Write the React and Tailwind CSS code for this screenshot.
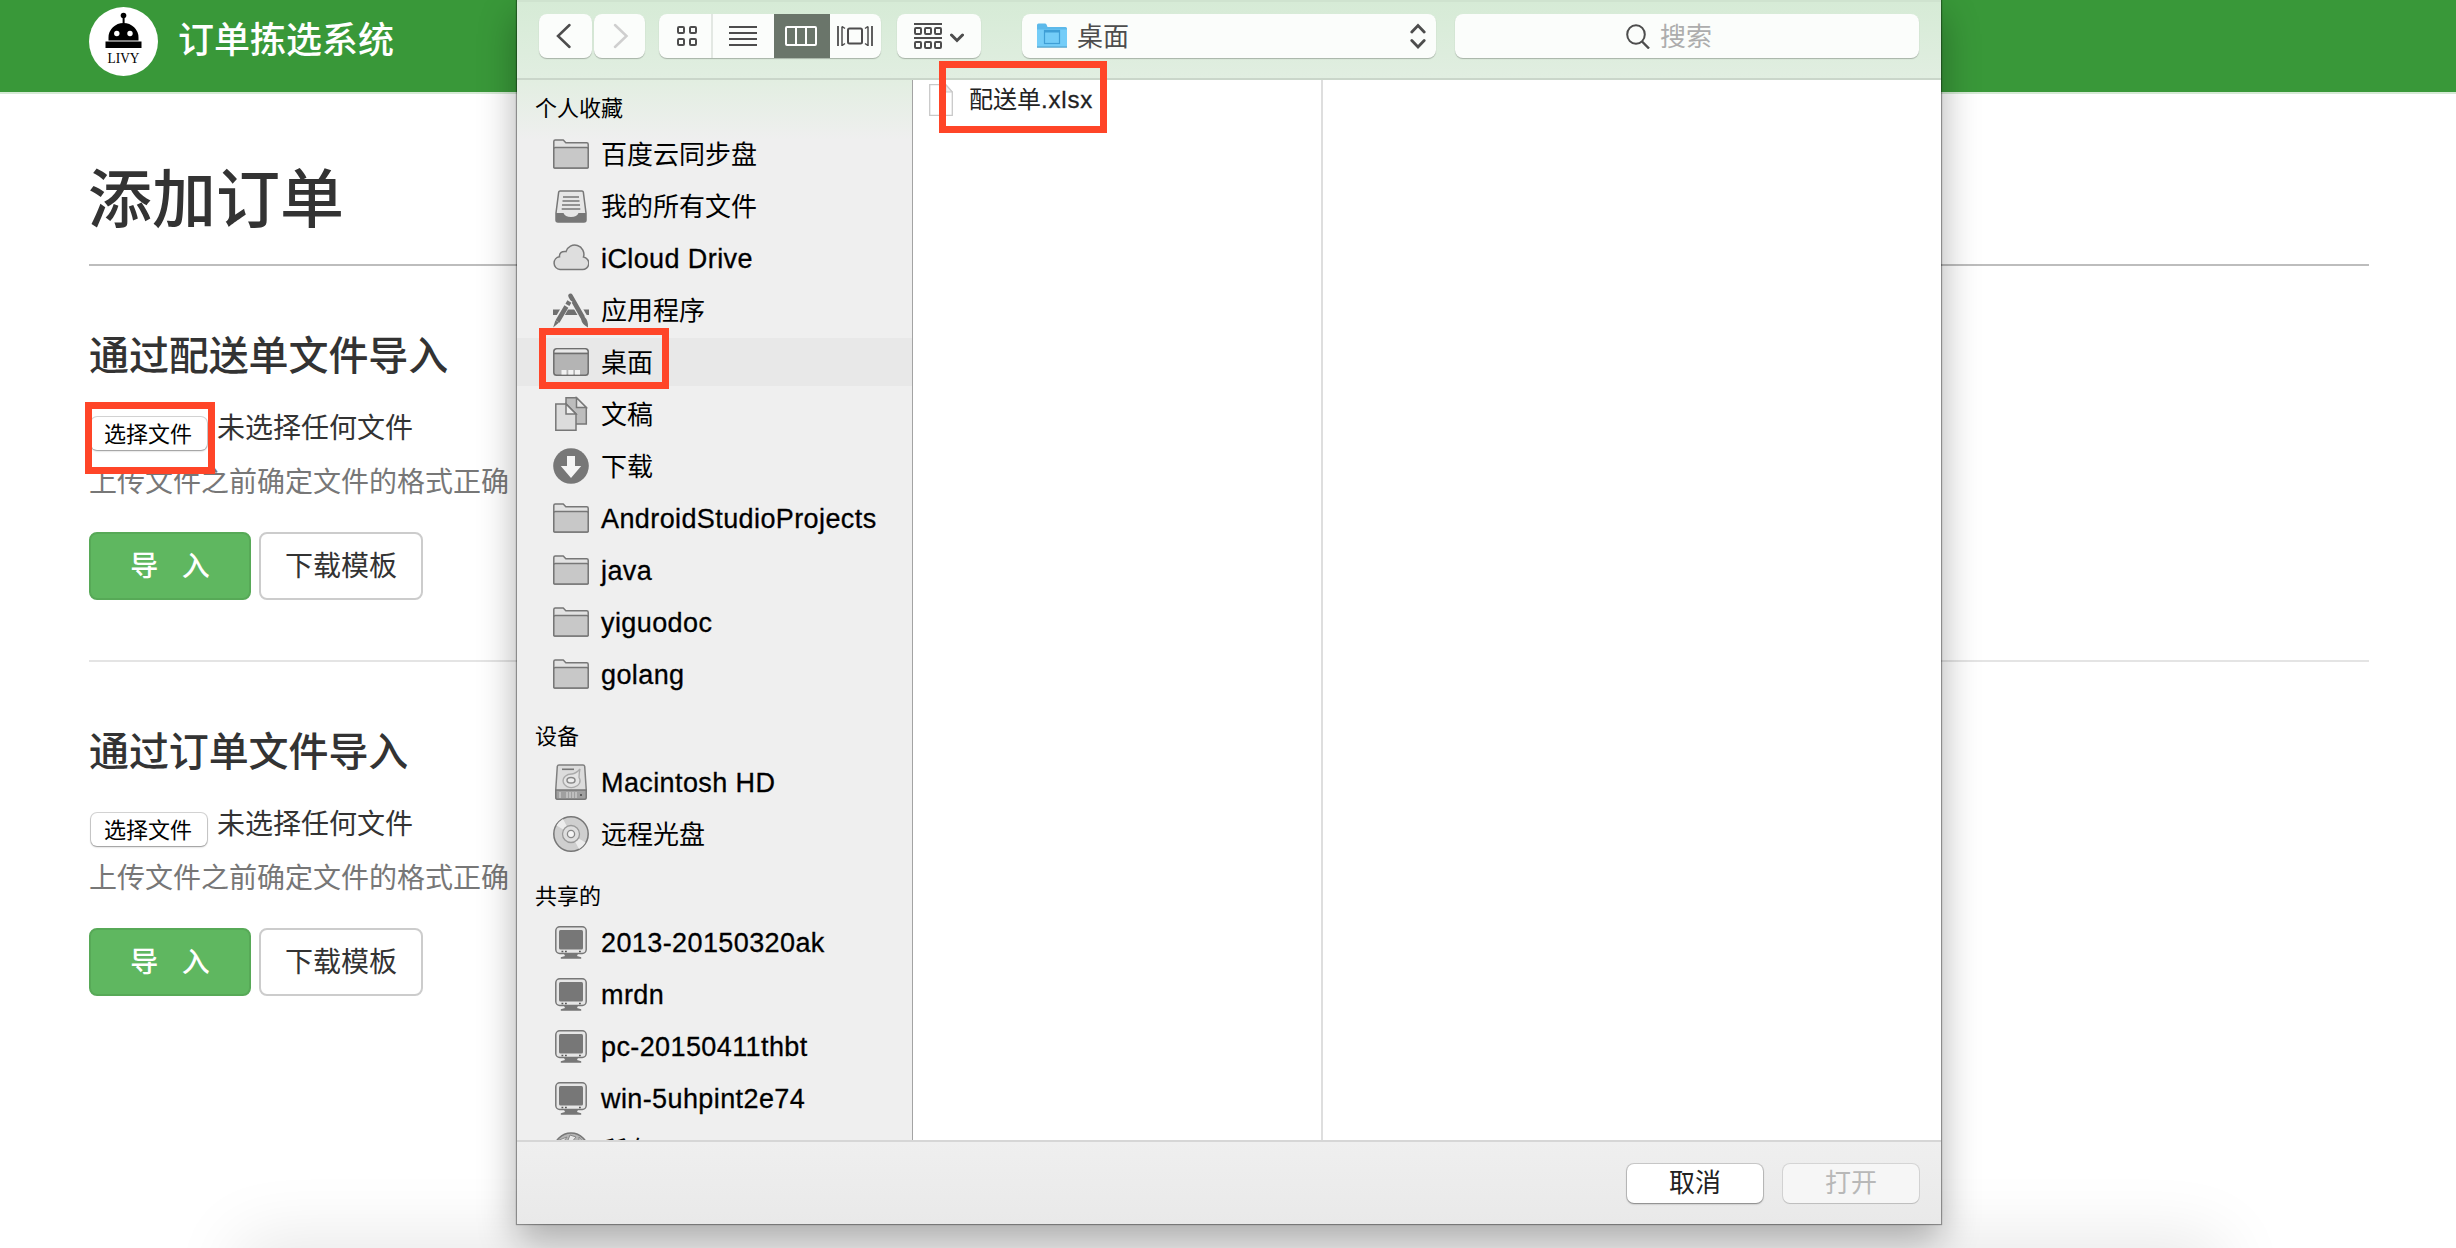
import React from "react";

const FONT = "font-['Liberation_Sans','Noto_Sans_CJK_SC',sans-serif]";

function Logo() {
  return (
    <svg className="size-[69px] shrink-0" viewBox="0 0 69 69">
      <circle cx="34.5" cy="34.5" r="34.5" fill="#fff" />
      <circle cx="34.5" cy="8.5" r="2.8" fill="#000" />
      <path d="M33.6 9h2v8h-2z" fill="#000" />
      <path d="M19.500 33.500v-3a15 14.500 0 0 1 30 0v3z" fill="#000" />
      <path d="M16.500 34.500h36v6.500h-36z" fill="#000" />
      <circle cx="27.800" cy="26.500" r="2.700" fill="#fff" />
      <circle cx="41" cy="26.500" r="2.700" fill="#fff" />
      <text x="34.500" y="55.500" textAnchor="middle" fontFamily="Liberation Serif, serif" fontSize="14" textLength="32" lengthAdjust="spacingAndGlyphs" fill="#000">LIVY</text>
    </svg>
  );
}

const icons = {
  folder: (
    <g stroke="#777" strokeWidth="1.500" strokeLinejoin="round">
      <path d="M.8 31V5.500Q.8 4 2.300 4h8l2.500 2.700h20.900q1.500 0 1.500 1.500V31q0 1-1 1H1.800q-1 0-1-1z" fill="#e2e2e2" />
      <path d="M.8 13q0-1.500 1.500-1.500h31.400q1.500 0 1.500 1.500v18q0 1-1 1H1.800q-1 0-1-1z" fill="#c8c8c8" />
    </g>
  ),
  allFiles: (
    <g>
      <path d="M7 3h22q1 0 1.300 1L33 25v7q0 2-2 2H5q-2 0-2-2v-7L5.700 4Q6 3 7 3z" fill="#e6e6e6" stroke="#777" strokeWidth="1.500" />
      <path d="M10 9h16M9.500 13h17M9 17h18M8.700 21h18.600" stroke="#777" strokeWidth="1.500" />
      <path d="M3 25h7.500q1.500 4 7.500 4t7.500-4H33v7q0 2-2 2H5q-2 0-2-2z" fill="#777" />
    </g>
  ),
  cloud: (
    <path d="M7 29.500a6.400 6.400 0 0 1-.5-12.700Q6 11 13 11.600A9 9 0 0 1 30.500 17a6.300 6.300 0 0 1-1.500 12.500z" fill="#dedede" stroke="#777" strokeWidth="1.500" />
  ),
  apps: (
    <g fill="#707070">
      <path d="M0 17.500h36V23H0z" />
      <path d="M17.200 2.500 36 35" stroke="#efefef" strokeWidth="8" />
      <path d="M17.500 3.800 29.500 25" stroke="#707070" strokeWidth="4.600" strokeLinecap="round" />
      <path d="M28 27l3.700-2q3.800 3.500 3.300 10.500-6-3-7-8.500z" />
      <path d="M16.500 8 2 33" stroke="#efefef" strokeWidth="7" />
      <path d="m16.400 9.500-2 3.400M13.400 14.500 4.500 29.500" stroke="#707070" strokeWidth="4.600" />
      <path d="M2.300 28.500 6 30.500.2 35.500z" />
    </g>
  ),
  desktop: (
    <g>
      <rect x=".8" y="4.800" width="34.400" height="26.400" rx="2.800" fill="#b4b4b4" stroke="#6e6e6e" strokeWidth="1.500" />
      <path d="M1.600 8.500q0-3 2.500-3h27.800q2.500 0 2.500 3z" fill="#e8e8e8" />
      <path d="M1 9.500h34" stroke="#6e6e6e" strokeWidth="1.500" />
      <path d="M8.500 26h5v4.500h-5zM15.300 26h5v4.500h-5zM22 26h5v4.500h-5z" fill="#f3f3f3" />
    </g>
  ),
  docs: (
    <g stroke="#777" strokeWidth="1.500">
      <path d="M13 1.800h10.500L33.300 11.500v16.500H13z" fill="#bdbdbd" />
      <path d="M23.500 1.800v9.700h9.800z" fill="#e6e6e6" />
      <path d="M2.800 8h10.500L23 17.800v16.400H2.800z" fill="#dcdcdc" />
      <path d="M13 8v10h10z" fill="#efefef" />
    </g>
  ),
  download: (
    <g>
      <circle cx="18" cy="18" r="17.800" fill="#777" />
      <path d="M14 8h8v10h6.200L18 30 7.800 18H14z" fill="#f5f5f5" />
    </g>
  ),
  disk: (
    <g>
      <path d="M6 .9h24q1.400 0 1.700 1.500L33.200 25v8.500q0 1.700-1.700 1.700h-27q-1.700 0-1.700-1.700V25L4.300 2.400Q4.600.9 6 .9z" fill="#dcdcdc" stroke="#808080" strokeWidth="1.500" />
      <path d="M9 5.300h12" stroke="#777" strokeWidth="1.600" />
      <path d="M27 5q-1 4-1 8.500a8.500 6.800 0 1 1-7-3.500q4-.5 8-5z" fill="#e4e4e4" stroke="#aaa" strokeWidth="1.300" />
      <ellipse cx="18" cy="16.200" rx="4" ry="2.800" fill="#eee" stroke="#888" strokeWidth="1.500" />
      <path d="M2.800 26h30.400v7.500q0 1.700-1.700 1.700h-27q-1.700 0-1.700-1.700z" fill="#a0a0a0" stroke="#777" strokeWidth="1.400" />
      <path d="M7 28v6M14 28v6M17 28v6M20 28v6M23 28v6" stroke="#cfcfcf" strokeWidth="1.300" />
      <circle cx="28" cy="31" r="1" fill="#444" />
    </g>
  ),
  disc: (
    <g>
      <circle cx="18" cy="18" r="17.200" fill="#cfcfcf" stroke="#777" strokeWidth="1.500" />
      <path d="M18 18 3.500 9.500A17 17 0 0 1 10 3zM18 18l14.500 8.500A17 17 0 0 1 26 33z" fill="#ececec" />
      <circle cx="18" cy="18" r="8.500" fill="#dedede" stroke="#999" strokeWidth="1.300" />
      <circle cx="18" cy="18" r="3.600" fill="#f5f5f5" stroke="#888" strokeWidth="1.300" />
    </g>
  ),
  pc: (
    <g>
      <rect x="2.800" y="2.800" width="30.400" height="26.600" rx="4" fill="#e6e6e6" stroke="#777" strokeWidth="1.500" />
      <rect x="6" y="6" width="24" height="19.500" rx="1.500" fill="#777" />
      <path d="M8.500 26.700h1.800v1.600H8.500zM12 26.700h1.800v1.600H12zM26 26.700h1.800v1.600H26z" fill="#555" />
      <path d="M11 29.800h14l-1 2.200 4.200 1.200v1.600H7.800v-1.600L12 32z" fill="#777" />
    </g>
  ),
  globe: (
    <g>
      <circle cx="18" cy="18" r="17" fill="#b5b5b5" stroke="#777" strokeWidth="1.600" />
      <path d="M6 8l8-3-5 7-6 2zM17 3l6 2-5 6-3-3zM26 5l5 6-5-1z" fill="#e8e8e8" stroke="#888" />
    </g>
  ),
};

function SideItem({ icon, label, active }) {
  const latin = label.charCodeAt(0) < 128;
  return (
    <li className="flex h-[52px] items-center">
      <div className={"flex h-12 w-full items-center pl-9 " + (active ? "bg-[#e8e8e8]" : "")}>
        <svg className="size-9 shrink-0" viewBox="0 0 36 36">{icons[icon]}</svg>
        <span
          className={
            "ml-3 pt-0.5 whitespace-nowrap leading-[48px] text-black " +
            (latin ? "text-[27px] tracking-[0.4px] [-webkit-text-stroke:0.3px_black]" : "text-[26px]")
          }
        >
          {label}
        </span>
      </div>
    </li>
  );
}

const sections = [
  {
    title: "个人收藏",
    heading: "h-12 pt-[9px]",
    items: [
      ["folder", "百度云同步盘"],
      ["allFiles", "我的所有文件"],
      ["cloud", "iCloud Drive"],
      ["apps", "应用程序"],
      ["desktop", "桌面", true],
      ["docs", "文稿"],
      ["download", "下载"],
      ["folder", "AndroidStudioProjects"],
      ["folder", "java"],
      ["folder", "yiguodoc"],
      ["folder", "golang"],
    ],
  },
  { title: "设备", heading: "h-14 pt-[17px]", items: [["disk", "Macintosh HD"], ["disc", "远程光盘"]] },
  {
    title: "共享的",
    heading: "h-14 pt-[17px]",
    items: [["pc", "2013-20150320ak"], ["pc", "mrdn"], ["pc", "pc-20150411thbt"], ["pc", "win-5uhpint2e74"], ["globe", "所有…"]],
  },
];

function Sidebar() {
  return (
    <aside className="h-full w-[396px] shrink-0 overflow-hidden border-r border-[#a3a3a3] bg-[#efefef] bg-[linear-gradient(to_bottom,#e2eee1,#efefef_60px)]">
      {sections.map((s) => (
        <section key={s.title}>
          <h4 className={"pl-[18px] text-[22px] leading-10 text-black " + s.heading}>{s.title}</h4>
          <ul>
            {s.items.map(([icon, label, active]) => (
              <SideItem key={label} icon={icon} label={label} active={active} />
            ))}
          </ul>
        </section>
      ))}
    </aside>
  );
}

const CTRL = "flex h-11 items-center justify-center rounded-lg bg-[#fbfdfb] shadow-[0_1px_1px_rgba(0,0,0,0.25)]";

function Toolbar() {
  return (
    <div className="flex h-20 items-start border-t-2 border-b-2 border-t-[#cfe3cf] border-b-[#cad6ca] bg-[linear-gradient(to_bottom,#d6ebd6,#e1eee1)] pt-3 pl-[22px]">
      <button className={CTRL + " w-[53px]"}>
        <svg className="size-7" viewBox="0 0 28 28" fill="none" stroke="#4d4d4d" strokeWidth="2.500">
          <path d="M17.500 3 6 14l11.500 11" strokeLinecap="round" />
        </svg>
      </button>
      <button className={CTRL + " ml-0.5 w-[51px]"}>
        <svg className="size-7" viewBox="0 0 28 28" fill="none" stroke="#cfcfcf" strokeWidth="2.500">
          <path d="M9 3 20.500 14 9 25" strokeLinecap="round" />
        </svg>
      </button>
      <div className={CTRL + " ml-3.5 w-[222px] overflow-hidden"}>
        <div className="flex h-full w-[54px] items-center justify-center border-r-2 border-[#e3e8e3]">
          <svg className="h-5 w-[21px] translate-x-0.5" viewBox="0 0 21 20" fill="none" stroke="#4d4d4d" strokeWidth="2">
            <rect x="1" y="1" width="6" height="6" rx="1" />
            <rect x="13" y="1" width="6" height="6" rx="1" />
            <rect x="1" y="13" width="6" height="6" rx="1" />
            <rect x="13" y="13" width="6" height="6" rx="1" />
          </svg>
        </div>
        <div className="flex h-full w-[61px] items-center justify-center">
          <svg className="h-5 w-7 -translate-x-px" viewBox="0 0 28 20" stroke="#4d4d4d" strokeWidth="2">
            <path d="M0 1h28M0 7h28M0 13h28M0 19h28" />
          </svg>
        </div>
        <div className="flex h-full w-14 items-center justify-center bg-[#6a756a]">
          <svg className="h-5 w-8 -translate-x-px" viewBox="0 0 32 20" fill="none" stroke="#fff" strokeWidth="2">
            <rect x="1" y="1" width="30" height="18" rx="1" />
            <path d="M11 1v18M21 1v18" />
          </svg>
        </div>
        <div className="flex h-full w-[51px] items-center justify-center">
          <svg className="h-5 w-9 -translate-x-px" viewBox="0 0 36 20" fill="none" stroke="#4d4d4d" strokeWidth="1.800">
            <path d="M1 0v20M35 0v20" />
            <path d="M5 .5v19l3-2M5 .5l3 2M31 .5v19l-3-2M31 .5l-3 2" strokeWidth="1.500" />
            <rect x="11" y="2.500" width="14" height="15" rx="1.500" strokeWidth="2" />
          </svg>
        </div>
      </div>
      <button className={CTRL + " ml-4 w-[84px] gap-2"}>
        <svg className="h-[26px] w-7" viewBox="0 0 28 26" fill="none" stroke="#4d4d4d" strokeWidth="2">
          <path d="M0 1h28M0 15h28" />
          <rect x="1" y="5" width="6" height="6" rx="1" />
          <rect x="11" y="5" width="6" height="6" rx="1" />
          <rect x="21" y="5" width="6" height="6" rx="1" />
          <rect x="1" y="19" width="6" height="6" rx="1" />
          <rect x="11" y="19" width="6" height="6" rx="1" />
          <rect x="21" y="19" width="6" height="6" rx="1" />
        </svg>
        <svg className="h-3 w-3.5 translate-y-0.5" viewBox="0 0 14 12" fill="none" stroke="#4d4d4d" strokeWidth="3">
          <path d="M1.500 3 7 8.500 12.500 3" strokeLinecap="round" />
        </svg>
      </button>
      <button className={CTRL + " ml-[41px] w-[414px] px-[15px]"}>
        <svg className="h-[26px] w-[30px]" viewBox="0 0 30 26">
          <path d="M0 24V2q0-1.500 1.500-1.500H8q1 0 1.500 1L10.500 4h18q1.500 0 1.500 1.500V24z" fill="#5cb9ea" />
          <path d="M0 6.500h30V24H0z" fill="#74cdf8" />
          <path d="M0 23.500h30v1.200H0z" fill="#4d9fca" />
          <rect x="7.500" y="7.500" width="15" height="13" fill="none" stroke="#3f9fd6" strokeWidth="1.200" />
          <path d="M7.500 8.500h15" stroke="#3f9fd6" strokeWidth="2" />
        </svg>
        <span className="ml-2.5 pt-px text-[26px] leading-[44px] text-[#4d4d4d]">桌面</span>
        <svg className="ml-auto h-[26px] w-4 translate-x-[5px]" viewBox="0 0 16 26" fill="none" stroke="#4d4d4d" strokeWidth="2.800" strokeLinecap="round">
          <path d="M1.800 9 8 2.500 14.200 9M1.800 17.500 8 24l6.200-6.500" />
        </svg>
      </button>
      <div className={CTRL + " ml-[19px] w-[464px] pr-9"}>
        <svg className="h-[25px] w-6" viewBox="0 0 24 25" fill="none" stroke="#4d4d4d" strokeWidth="2">
          <ellipse cx="10" cy="10.500" rx="8.800" ry="9.300" />
          <path d="m16 17.500 7 7" strokeWidth="2.400" />
        </svg>
        <span className="ml-2.5 pt-px text-[26px] leading-[44px] text-[#adadad]">搜索</span>
      </div>
    </div>
  );
}

function Highlight({ className }) {
  return <div className={"pointer-events-none absolute border-[7px] border-[#ff4528] " + className} />;
}

function Dialog() {
  return (
    <div className="absolute top-0 left-[517px] flex h-[1224px] w-[1424px] flex-col bg-white shadow-[0_0_1px_1px_rgba(0,0,0,0.35),0_16px_36px_rgba(0,0,0,0.32)]">
      <Toolbar />
      <div className="flex h-[1060px]">
        <Sidebar />
        <div className="w-[410px] shrink-0 border-r-2 border-[#dedede] pl-4">
          <div className="flex h-9 items-center pt-[3px]">
            <svg className="h-8 w-6" viewBox="0 0 24 32">
              <path d="M.7.700h16L23.300 8v23.300H.7z" fill="#fff" stroke="#c9c9c9" strokeWidth="1.300" />
              <path d="M16.700.700V8h6.600z" fill="#eee" stroke="#c9c9c9" strokeWidth="1.200" />
            </svg>
            <span className="ml-4 text-2xl leading-9 text-[#222]">
              配送单<span className="tracking-[0.8px] [-webkit-text-stroke:0.3px_#222]">.xlsx</span>
            </span>
          </div>
        </div>
      </div>
      <div className="flex h-[84px] justify-end gap-5 border-t-2 border-[#d6d6d6] bg-[linear-gradient(to_bottom,#efefef,#e9e9e9)] pt-[22px] pr-[22px]">
        <button className="h-[39px] w-[136px] rounded-[7px] bg-white text-[26px] leading-[39px] text-[#222] shadow-[0_0_0_1px_rgba(0,0,0,0.15),0_1px_2px_rgba(0,0,0,0.35)]">取消</button>
        <button className="h-[39px] w-[136px] rounded-[7px] bg-[#f6f6f6] text-[26px] leading-[39px] text-[#b8b8b8] shadow-[0_0_0_1px_rgba(0,0,0,0.1),0_1px_1px_rgba(0,0,0,0.1)]">打开</button>
      </div>
      <Highlight className="top-[61px] left-[422px] h-[72px] w-[168px]" />
      <Highlight className="top-[328px] left-[22px] h-[61px] w-[130px]" />
    </div>
  );
}

function ImportGroup({ title }) {
  return (
    <section className="h-[394px] pt-[64px]">
      <h3 className="h-[52px] text-[40px] leading-[52px] font-medium tracking-[-0.1px] text-[#333]">{title}</h3>
      <div className="flex h-[64px] items-start pt-[19px] pl-0.5">
        <button className="mt-4 h-[33px] w-[116px] rounded-md bg-white pr-0.5 text-[22px] leading-[35px] text-black shadow-[0_0_0_1px_rgba(0,0,0,0.16),0_1px_2px_rgba(0,0,0,0.3)]">选择文件</button>
        <span className="ml-[10px] text-[28px] leading-[56px] text-[#333]">未选择任何文件</span>
      </div>
      <p className="mt-[17px] h-[53px] text-[28px] leading-[40px] text-[#777]">上传文件之前确定文件的格式正确</p>
      <div className="mt-[16px] flex gap-2">
        <button className="h-[68px] w-[162px] rounded-lg border-2 border-[#57a957] bg-[#5fb760] text-[28px] leading-[65px] font-medium whitespace-pre text-white">{"导\u00a0\u00a0\u00a0入"}</button>
        <button className="h-[68px] w-[164px] rounded-lg border-2 border-[#ccc] bg-white text-[28px] leading-[65px] text-[#333]">下载模板</button>
      </div>
    </section>
  );
}

export default function App() {
  return (
    <div className={"relative h-[1248px] w-[2456px] overflow-hidden bg-white " + FONT}>
      <header className="flex h-[94px] items-start border-b-2 border-[#d5ead5] bg-[#399839] pt-[7px] pl-[89px]">
        <Logo />
        <span className="ml-5 h-[66px] text-4xl leading-[67px] font-medium text-white">订单拣选系统</span>
      </header>
      <main className="w-[2369px] pl-[89px]">
        <h1 className="h-[172px] border-b-2 border-[#bdbdbd] pt-[64px] text-[64px] leading-[84px] font-medium text-[#333]">
          <span className="-ml-px">添加订单</span>
        </h1>
        <ImportGroup title="通过配送单文件导入" />
        <hr className="h-0.5 border-0 bg-[#e4e4e4]" />
        <ImportGroup title="通过订单文件导入" />
      </main>
      <div className="absolute top-[1260px] left-[260px] h-10 w-[1940px] shadow-[0_0_70px_20px_rgba(0,0,0,0.1)]" />
      <Highlight className="top-[402px] left-[85px] h-[72px] w-[130px]" />
      <Dialog />
    </div>
  );
}
